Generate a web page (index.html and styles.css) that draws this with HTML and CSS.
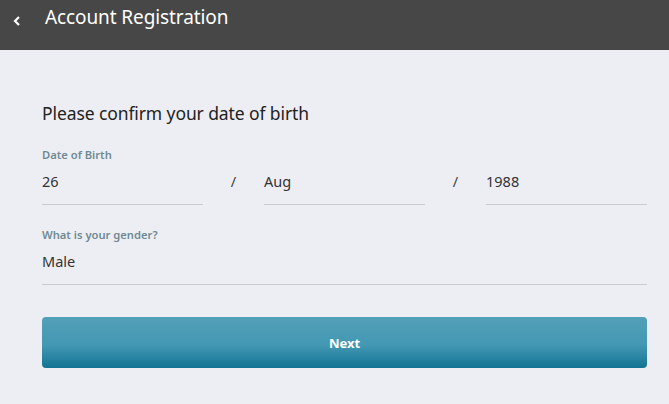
FILE: index.html
```html
<!DOCTYPE html>
<html lang="en">
  <head>
    <meta charset="UTF-8" />
    <meta name="viewport" content="width=device-width, initial-scale=1.0" />
    <title>Account Registration</title>
    <link rel="stylesheet" href="styles.css">
  </head>
  <body>
    <header class="topBar">
      <a class="backLink" href="#">
        <svg width="10" height="12" viewBox="0 0 10 12"><path d="M7 2 L3 6 L7 10" fill="none" stroke="#fff" stroke-width="2.2"/></svg>
      </a>
      <h1>Account Registration</h1>
    </header>

    <main class="content">
      <h2>Please confirm your date of birth</h2>

      <div class="field">
        <label>Date of Birth</label>
        <div class="dobRow">
          <div class="value">26</div>
          <span class="slash">/</span>
          <div class="value">Aug</div>
          <span class="slash">/</span>
          <div class="value">1988</div>
        </div>
      </div>

      <div class="field">
        <label>What is your gender?</label>
        <div class="value">Male</div>
      </div>

      <button class="button">Next</button>
    </main>
  </body>
</html>
```

FILE: styles.css
```css
body {
  margin: 0;
  background: #edeef3;
  font-family: "Noto Sans", "Open Sans", sans-serif;
  color: #222;
}

.topBar {
  height: 50px;
  background: #474747;
  display: flex;
  align-items: flex-start;
  padding-left: 12px;
}

.backLink {
  display: block;
  width: 10px;
  height: 12px;
  margin-top: 10px;
}

.topBar h1 {
  margin: 4px 0 0 23px;
  font-size: 19px;
  font-weight: 400;
  color: #fff;
  letter-spacing: -0.1px;
}

.content {
  padding: 51px 22px 0 42px;
}

.content h2 {
  margin: 0 0 22px;
  font-size: 17.5px;
  font-weight: 400;
  color: #222;
  letter-spacing: -0.1px;
}

.field {
  margin-bottom: 22px;
}

.field label {
  display: block;
  font-size: 11.2px;
  font-weight: 600;
  color: #6f8a94;
  margin-bottom: 3px;
}

.value {
  font-size: 14.5px;
  color: #333;
  padding: 6px 0 13px;
  border-bottom: 1px solid #c8ccd0;
}

.dobRow {
  display: grid;
  grid-template-columns: 1fr 61px 1fr 61px 1fr;
}

.slash {
  text-align: center;
  font-size: 14.5px;
  color: #444;
  padding-top: 6px;
}

.button {
  display: block;
  width: 100%;
  height: 51px;
  margin-top: 32px;
  border: 0;
  border-radius: 4px;
  background-image: linear-gradient(180deg, #539fb8, #4398b3 55%, #127494);
  color: #fff;
  font-family: "Noto Sans", "Open Sans", sans-serif;
  font-size: 13px;
  font-weight: 700;
  cursor: pointer;
}
```
